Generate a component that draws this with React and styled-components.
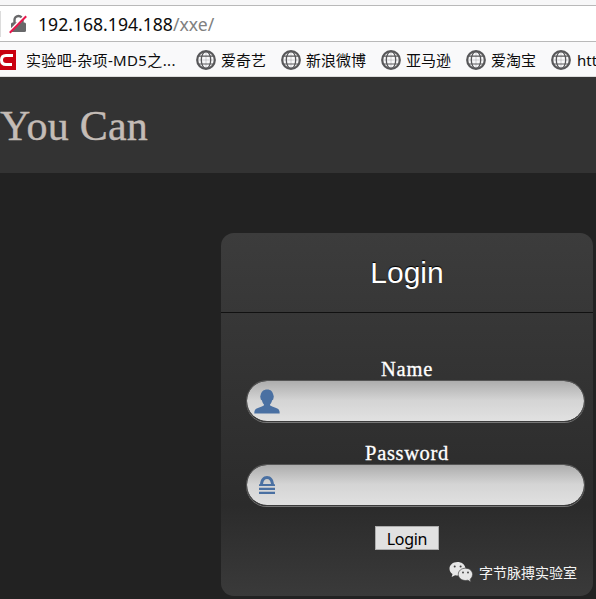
import React from 'react';
import styled, { createGlobalStyle } from 'styled-components';

const GlobalStyle = createGlobalStyle`
  * { box-sizing: border-box; }
  body {
    margin: 0;
    overflow: hidden;
    background: #222;
    font-family: "Noto Sans", "Noto Sans CJK SC", sans-serif;
  }
`;

const Page = styled.div`
  height: 599px;
  width: 596px;
  overflow: hidden;
  background: #222;
`;

const AddressRow = styled.div`
  height: 42px;
  padding-top: 5px;
  background: #f7f7f8;
`;

const AddressBar = styled.div`
  height: 37px;
  display: flex;
  align-items: center;
  background: #fff;
  border-top: 1px solid #b9b9b9;
  border-bottom: 1px solid #b9b9b9;
`;

const BarEdge = styled.div`
  width: 1px;
  height: 26px;
  margin-right: 8px;
  background: #dcdcdc;
`;

const Url = styled.div`
  margin-left: 9px;
  font-size: 17.6px;
  line-height: 24px;
  color: #0c0c0d;
  white-space: nowrap;
`;

const UrlPath = styled.span`
  color: #808080;
`;

const Bookmarks = styled.div`
  height: 35px;
  display: flex;
  align-items: center;
  padding-top: 2px;
  background: #f9f9fa;
  border-bottom: 1px solid #dcdcdc;
  overflow: hidden;
`;

const Bookmark = styled.div`
  flex: none;
  display: flex;
  align-items: center;
  gap: ${(p) => p.$gap || 5}px;
  width: ${(p) => p.$width}px;
  height: 24px;
  svg { flex: none; }
`;

const BookmarkLabel = styled.span`
  font-family: "Noto Sans", "Noto Sans CJK SC", sans-serif;
  font-size: 15px;
  line-height: 22px;
  letter-spacing: ${(p) => p.$spacing || 0}px;
  color: #0c0c0d;
  white-space: nowrap;
`;

const SiteHeader = styled.header`
  height: 96px;
  background: #333;
  overflow: hidden;
`;

const SiteTitle = styled.h1`
  margin: 0;
  padding-top: 24px;
  font: 400 42px/50px Georgia, "Liberation Serif", serif;
  letter-spacing: 0.25px;
  color: #c4bcb6;
  -webkit-text-stroke: 0.4px #c4bcb6;
  white-space: nowrap;
`;

const Card = styled.main`
  width: 372px;
  height: 363px;
  margin: 60px 0 0 221px;
  border-radius: 13px;
  background: linear-gradient(#3c3c3c, #2b2b2b 75%, #3a3a3a);
`;

const CardTitle = styled.h2`
  height: 80px;
  margin: 0;
  border-bottom: 1px solid #111;
  font: 400 30px/79px "Liberation Sans", Arial, sans-serif;
  text-align: center;
  color: #fff;
  text-shadow: 0 -1px 1px #000;
`;

const Form = styled.div`
  display: flex;
  flex-direction: column;
  padding: 44px 8px 0 25px;
`;

const Field = styled.label`
  display: block;
  height: 84px;
`;

const FieldLabel = styled.span`
  display: block;
  width: 322px;
  height: 23px;
  font: 400 20.5px/25px Georgia, "Liberation Serif", serif;
  letter-spacing: ${(p) => p.$spacing}px;
  text-align: center;
  color: #fff;
  -webkit-text-stroke: 0.3px #fff;
`;

const InputBox = styled.span`
  display: flex;
  align-items: center;
  height: 43px;
  width: 339px;
  padding-left: 7px;
  border: 1px solid #555;
  border-bottom-color: #3c3c3c;
  border-radius: 22px;
  background: linear-gradient(#adadad, #d4d4d4 48%, #e1e1e1);
  background-clip: padding-box;
  height: 42px;
  box-shadow: 0 1px 0 #777;
`;

const Submit = styled.button`
  width: 64px;
  height: 24px;
  margin: 1px 0 0 129px;
  padding: 0;
  border: 1px solid #adadad;
  background: #e1e1e1;
  color: #000;
  font: 400 16px/24px "Noto Sans", sans-serif;
  letter-spacing: -0.3px;
`;

const Credit = styled.div`
  display: flex;
  align-items: center;
  gap: 6px;
  height: 26px;
  margin: 9px 0 0 203px;
  font: 400 14px/24px "Noto Sans CJK SC", sans-serif;
  color: #f4f4f4;
  white-space: nowrap;
`;

const Globe = () => (
  <svg width="20" height="20" viewBox="0 0 20 20" fill="none" stroke="#58585a">
    <circle cx="10" cy="10" r="8.8" strokeWidth="2.2" />
    <ellipse cx="10" cy="10" rx="4.7" ry="8.5" strokeWidth="1.3" />
    <path d="M10 1v18" strokeWidth=".8" opacity=".3" />
    <path d="M3 6.1h14M3 14h14" strokeWidth="1.1" />
    <path d="M1 10h18" strokeWidth=".8" opacity=".3" />
  </svg>
);

const RedMark = () => (
  <svg width="16" height="20" viewBox="0 0 16 20">
    <path d="M0 0h16v20H0z" fill="#c90010" />
    <path d="M13 5.500H6Q1.500 5.500 1.500 10T6 14.500H12" fill="none" stroke="#fff" strokeWidth="3" />
  </svg>
);

const InsecureLock = () => (
  <svg width="20" height="20" viewBox="0 0 20 20">
    <path d="M5.500 9V6a4 4 0 0 1 8 0V9" fill="none" stroke="#68686a" strokeWidth="2.400" />
    <rect x="2" y="8.500" width="15" height="9.500" rx="1.500" fill="#68686a" />
    <path d="M-.2 17.800 16.200 1.300" stroke="#fff" strokeWidth="2" />
    <path d="M.8 18.800 17.200 2.300" stroke="#e8174b" strokeWidth="2" />
  </svg>
);

const Person = () => (
  <svg width="26" height="25" viewBox="0 0 26 25" fill="#4a70a2">
    <path d="M13.200.5C9.500.5 7.300 2.700 6.700 5.800l-.5 1.800.6 3 1.200.8c.3 1.700 1 3 2 4v.9c-1.400 1.600-6.600 2.300-8.700 4.100Q.2 21.800.3 24.500h25.400q.1-2.700-1-4.100c-1.900-1.800-7.200-2.500-8.700-4.100v-.9c1-1 1.700-2.300 2-4l1.200-.8.6-3-.5-1.800C18.700 2.700 16.900.5 13.200.5Z" />
  </svg>
);

const Padlock = () => (
  <svg width="26" height="18" viewBox="0 0 26 18" fill="#4a70a2">
    <path d="M5 10V8.300h1C6.600 3 9 0 13 0s6.500 3 7 8.300h1V10ZM9 8h8c-.5-3.500-1.800-5-4-5S9.500 4.500 9 8Z" fillRule="evenodd" />
    <path d="M5 11.800h16V14H5zM5 15.800h16V18H5z" />
  </svg>
);

const WeChat = () => (
  <svg width="24" height="22" viewBox="0 0 24 22">
    <path d="M8.500 1C3.800 1 .5 3.900.5 7.700c0 2.200 1.100 4 3 5.200L2.700 16l3.400-1.800q3.600.8 6.400-.4C16 12.300 17 9.500 16.300 6.500 15.500 3.200 12.400 1 8.500 1Z" fill="#e6e6e6" />
    <path d="M16.500 7.200c-4.200 0-7.200 2.700-7.200 6.100 0 3.500 3.200 6.200 7.400 6.200l2.200-.3L22 21l-.8-2.700q2.400-2 2.400-4.800c0-3.500-3-6.300-7.100-6.300Z" fill="#e6e6e6" stroke="#444" strokeWidth=".7" />
    <g fill="#3c3c3c">
      <circle cx="5.700" cy="5.600" r="1" /><circle cx="11.600" cy="5.600" r="1" />
      <circle cx="14" cy="11.500" r=".9" /><circle cx="19" cy="11.500" r=".9" />
    </g>
  </svg>
);

const sites = [
  { name: '爱奇艺', width: 85 },
  { name: '新浪微博', width: 100 },
  { name: '亚马逊', width: 85 },
  { name: '爱淘宝', width: 85 },
  { name: 'htt', width: 85, gap: 6 },
];

export default function App() {
  return (
    <Page>
      <GlobalStyle />
      <AddressRow>
        <AddressBar>
          <BarEdge />
          <InsecureLock />
          <Url>192.168.194.188<UrlPath>/xxe/</UrlPath></Url>
        </AddressBar>
      </AddressRow>
      <Bookmarks>
        <Bookmark $width={196} $gap={10}>
          <RedMark />
          <BookmarkLabel $spacing={0.35}>实验吧-杂项-MD5之...</BookmarkLabel>
        </Bookmark>
        {sites.map((site) => (
          <Bookmark key={site.name} $width={site.width} $gap={site.gap}>
            <Globe />
            <BookmarkLabel>{site.name}</BookmarkLabel>
          </Bookmark>
        ))}
      </Bookmarks>
      <SiteHeader>
        <SiteTitle>You Can</SiteTitle>
      </SiteHeader>
      <Card>
        <CardTitle>Login</CardTitle>
        <Form>
          <Field>
            <FieldLabel $spacing={0.8}>Name</FieldLabel>
            <InputBox><Person /></InputBox>
          </Field>
          <Field>
            <FieldLabel $spacing={0.65}>Password</FieldLabel>
            <InputBox><Padlock /></InputBox>
          </Field>
          <Submit>Login</Submit>
          <Credit><WeChat />字节脉搏实验室</Credit>
        </Form>
      </Card>
    </Page>
  );
}
